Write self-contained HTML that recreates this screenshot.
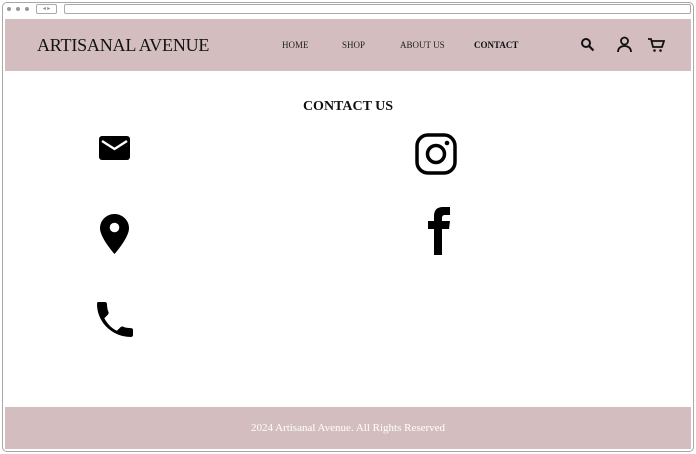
<!DOCTYPE html>
<html><head><style>
*{margin:0;padding:0;box-sizing:border-box}
body{width:696px;height:454px;background:#fff;position:relative;overflow:hidden;font-family:"Liberation Serif",serif}
.frame{position:absolute;left:2px;top:2px;width:692px;height:450px;border:1px solid #a8a8a8;border-radius:5px;background:#fff}
.dot{position:absolute;top:7px;width:4px;height:4px;border-radius:50%;background:#999}
.nav{position:absolute;left:36px;top:4px;width:21px;height:10px;border:1px solid #aaa;border-radius:2px;font-size:6px;color:#888;text-align:center;line-height:8px}
.url{position:absolute;left:64px;top:4px;width:627px;height:10px;border:1px solid #aaa;border-radius:2px}
.hdr{position:absolute;left:5px;top:19px;width:686px;height:52px;background:#d3bdbf}
.logo{position:absolute;left:37px;top:35px;font-size:18px;color:#111;letter-spacing:-0.2px}
.menu{position:absolute;top:40px;font-size:9px;color:#222}
h1{position:absolute;left:0;width:696px;top:99px;text-align:center;font-size:14px;font-weight:bold;color:#111}
.ftr{position:absolute;left:5px;top:407px;width:686px;height:42px;background:#d3bdbf;color:#fff;font-size:11px;text-align:center;line-height:42px}
svg{position:absolute}
</style></head><body>
<div class="frame"></div>
<div class="dot" style="left:7px"></div><div class="dot" style="left:16px"></div><div class="dot" style="left:25px"></div>
<div class="nav">◂ ▸</div>
<div class="url"></div>
<div class="hdr"></div>
<div class="logo">ARTISANAL AVENUE</div>
<div class="menu" style="left:282px">HOME</div>
<div class="menu" style="left:342px">SHOP</div>
<div class="menu" style="left:400px">ABOUT US</div>
<div class="menu" style="left:474px;font-weight:bold;color:#111">CONTACT</div>
<svg style="left:580px;top:37px" width="15" height="15" viewBox="0 0 15 15"><circle cx="6" cy="6" r="4" fill="none" stroke="#111" stroke-width="2"/><path d="M9 9l4.5 4.5" stroke="#111" stroke-width="2.2"/></svg>
<svg style="left:616px;top:36px" width="17" height="17" viewBox="0 0 17 17"><circle cx="8.5" cy="5" r="3.5" fill="none" stroke="#111" stroke-width="1.8"/><path d="M2 16c0-4 3-6 6.5-6s6.5 2 6.5 6" fill="none" stroke="#111" stroke-width="1.8"/></svg>
<svg style="left:647px;top:37px" width="18" height="16" viewBox="0 0 18 16"><path d="M1 2h3l2 8h9l2-6H5" fill="none" stroke="#111" stroke-width="1.8"/><circle cx="7.5" cy="13.5" r="1.3" fill="#111"/><circle cx="13.5" cy="13.5" r="1.3" fill="#111"/></svg>
<h1>CONTACT US</h1>
<svg style="left:99px;top:136px" width="31" height="24" viewBox="0 0 31 24"><rect width="31" height="24" rx="3" fill="#000"/><path d="M3 5l12.5 8L28 5" fill="none" stroke="#fff" stroke-width="2.4"/></svg>
<svg style="left:415px;top:133px" width="42" height="42" viewBox="0 0 42 42"><rect x="2" y="2" width="38" height="38" rx="11" fill="none" stroke="#000" stroke-width="3.5"/><circle cx="21" cy="21" r="8.5" fill="none" stroke="#000" stroke-width="3.5"/><circle cx="32" cy="10" r="2.3" fill="#000"/></svg>
<svg style="left:100px;top:214px" width="29" height="40" viewBox="0 0 29 40"><path d="M14.5 0C6.5 0 0 6.3 0 14.2c0 9.5 14.5 25.8 14.5 25.8S29 23.7 29 14.2C29 6.3 22.5 0 14.5 0z" fill="#000"/><circle cx="14.5" cy="13.5" r="4.8" fill="#fff"/></svg>
<svg style="left:427px;top:207px" width="24" height="48" viewBox="0 0 24 48"><path d="M7 48V22H1v-8h6V9c0-6 3-9 9-9h7v8h-5c-2 0-3 1-3 3v3h8l-1 8h-7v26z" fill="#000"/></svg>
<svg style="left:96px;top:301px" width="37" height="37" viewBox="0 0 37 37"><path d="M2 1h7c1 0 2 1 2 2 0 3 .5 6 1.5 8 .3 1 0 2-.6 2.6l-3.6 3.6c3 5.5 7 9.8 12.6 12.6l3.6-3.6c.6-.6 1.6-.9 2.6-.6 2 1 5 1.5 8 1.5 1 0 2 1 2 2V34c0 1-1 2-2 2C16 36 1 21 1 3c0-1 .5-2 1-2z" fill="#000"/></svg>
<div class="ftr">2024 Artisanal Avenue. All Rights Reserved</div>
</body></html>
